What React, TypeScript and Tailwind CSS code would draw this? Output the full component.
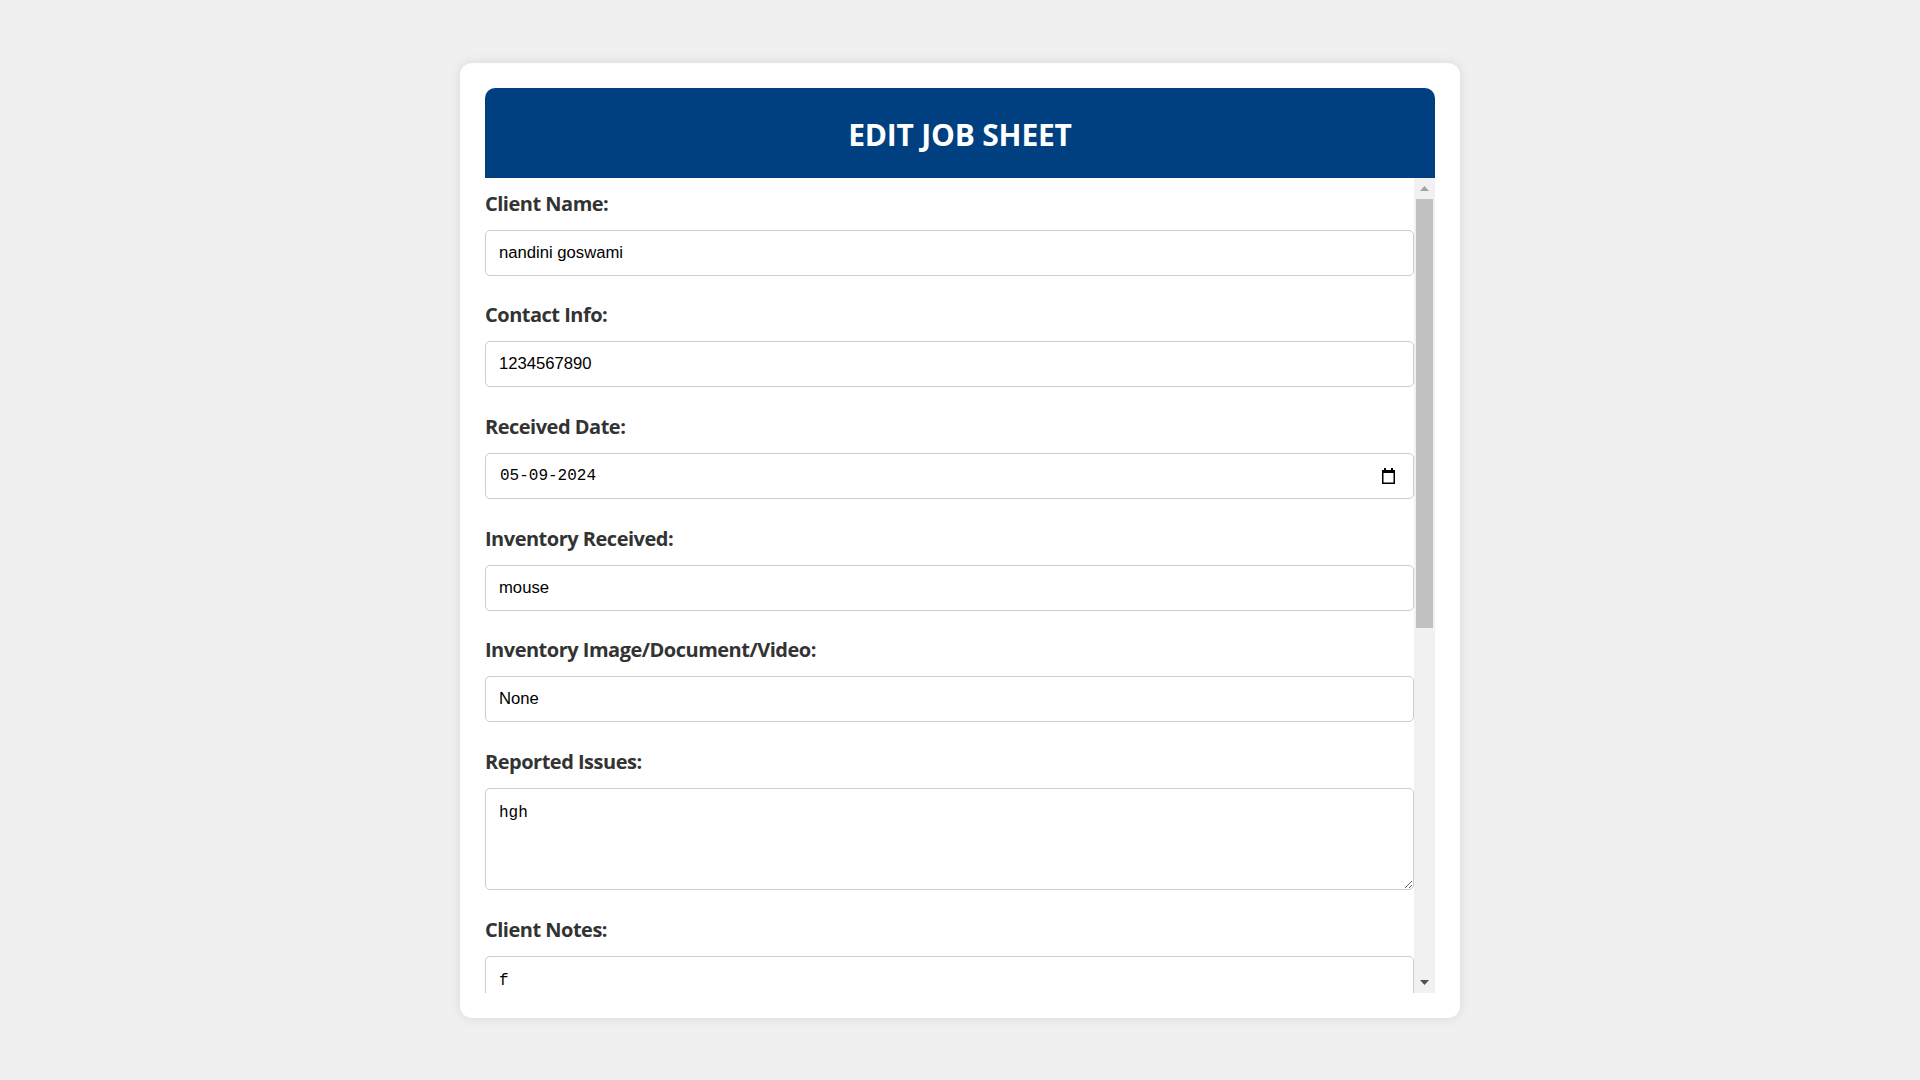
import React from 'react'

const labelCls =
  "block text-[20px] leading-[24px] font-bold tracking-[-0.5px] text-[#333] mb-[14px] font-['Open_Sans',sans-serif]";

const Field = ({ label, value }: { label: string; value: string }) => {
  return (
    <div className="mb-[27.7px]">
      <label className={labelCls}>{label}</label>
      <input
        readOnly
        value={value}
        className="block w-full h-[46px] px-[13px] border border-[#ccc] rounded-[5px] text-[16.67px] text-black font-['Liberation_Sans',Arial,sans-serif] outline-none"
      />
    </div>
  );
};

const CalendarIcon = () => (
  <svg width="15" height="16" viewBox="0 0 15 16" className="shrink-0">
    <rect x="3" y="0" width="2" height="3" fill="#000" />
    <rect x="10" y="0" width="2" height="3" fill="#000" />
    <rect x="1" y="2" width="13" height="3" fill="#000" />
    <rect x="1.75" y="2.75" width="11.5" height="12.5" fill="none" stroke="#000" strokeWidth="1.5" />
  </svg>
);

const Scrollbar = () => (
  <div className="w-[21px] bg-[#f1f1f1] flex flex-col shrink-0">
    <div className="h-[21px] flex items-center justify-center">
      <svg width="9" height="5" viewBox="0 0 9 5">
        <polygon points="0,5 9,5 4.5,0" fill="#a3a3a3" />
      </svg>
    </div>
    <div className="h-[429px] mx-[2px] bg-[#c1c1c1]" />
    <div className="flex-1" />
    <div className="h-[21px] flex items-center justify-center">
      <svg width="9" height="5" viewBox="0 0 9 5">
        <polygon points="0,0 9,0 4.5,5" fill="#505050" />
      </svg>
    </div>
  </div>
);

const EditJobSheet = () => {
  return (
    <div className="min-h-screen bg-[#f0f0f0] flex items-center justify-center">
      <div className="w-[1000px] bg-white rounded-[12px] p-[25px] shadow-[0_0_12px_rgba(0,0,0,0.1)]">
        <div className="h-[90px] pt-[3px] bg-[#004080] rounded-t-[10px] flex items-center justify-center">
          <h2 className="text-white text-[30px] font-bold tracking-[-0.2px] font-['Open_Sans',sans-serif]">EDIT JOB SHEET</h2>
        </div>

        <div className="flex h-[815px]">
          <div className="flex-1 overflow-hidden pt-[14px]">
            <Field label="Client Name:" value="nandini goswami" />
            <Field label="Contact Info:" value="1234567890" />

            <div className="mb-[27.7px]">
              <label className={labelCls}>Received Date:</label>
              <div className="flex items-center h-[46px] pl-[14px] pr-[17px] border border-[#ccc] rounded-[5px]">
                <span className="flex-1 text-[16px] text-black font-['Liberation_Mono',monospace]">05-09-2024</span>
                <CalendarIcon />
              </div>
            </div>

            <Field label="Inventory Received:" value="mouse" />
            <Field label="Inventory Image/Document/Video:" value="None" />

            <div className="mb-[27.7px]">
              <label className={labelCls}>Reported Issues:</label>
              <textarea
                readOnly
                value="hgh"
                className="block w-full h-[102px] px-[13px] py-[12px] border border-[#ccc] rounded-[5px] text-[16px] text-black font-['Liberation_Mono',monospace] outline-none resize-y"
              />
            </div>

            <div>
              <label className={labelCls}>Client Notes:</label>
              <textarea
                readOnly
                value="f"
                className="block w-full h-[102px] px-[13px] py-[12px] border border-[#ccc] rounded-[5px] text-[16px] text-black font-['Liberation_Mono',monospace] outline-none resize-y"
              />
            </div>
          </div>
          <Scrollbar />
        </div>
      </div>
    </div>
  );
};

export default EditJobSheet;
